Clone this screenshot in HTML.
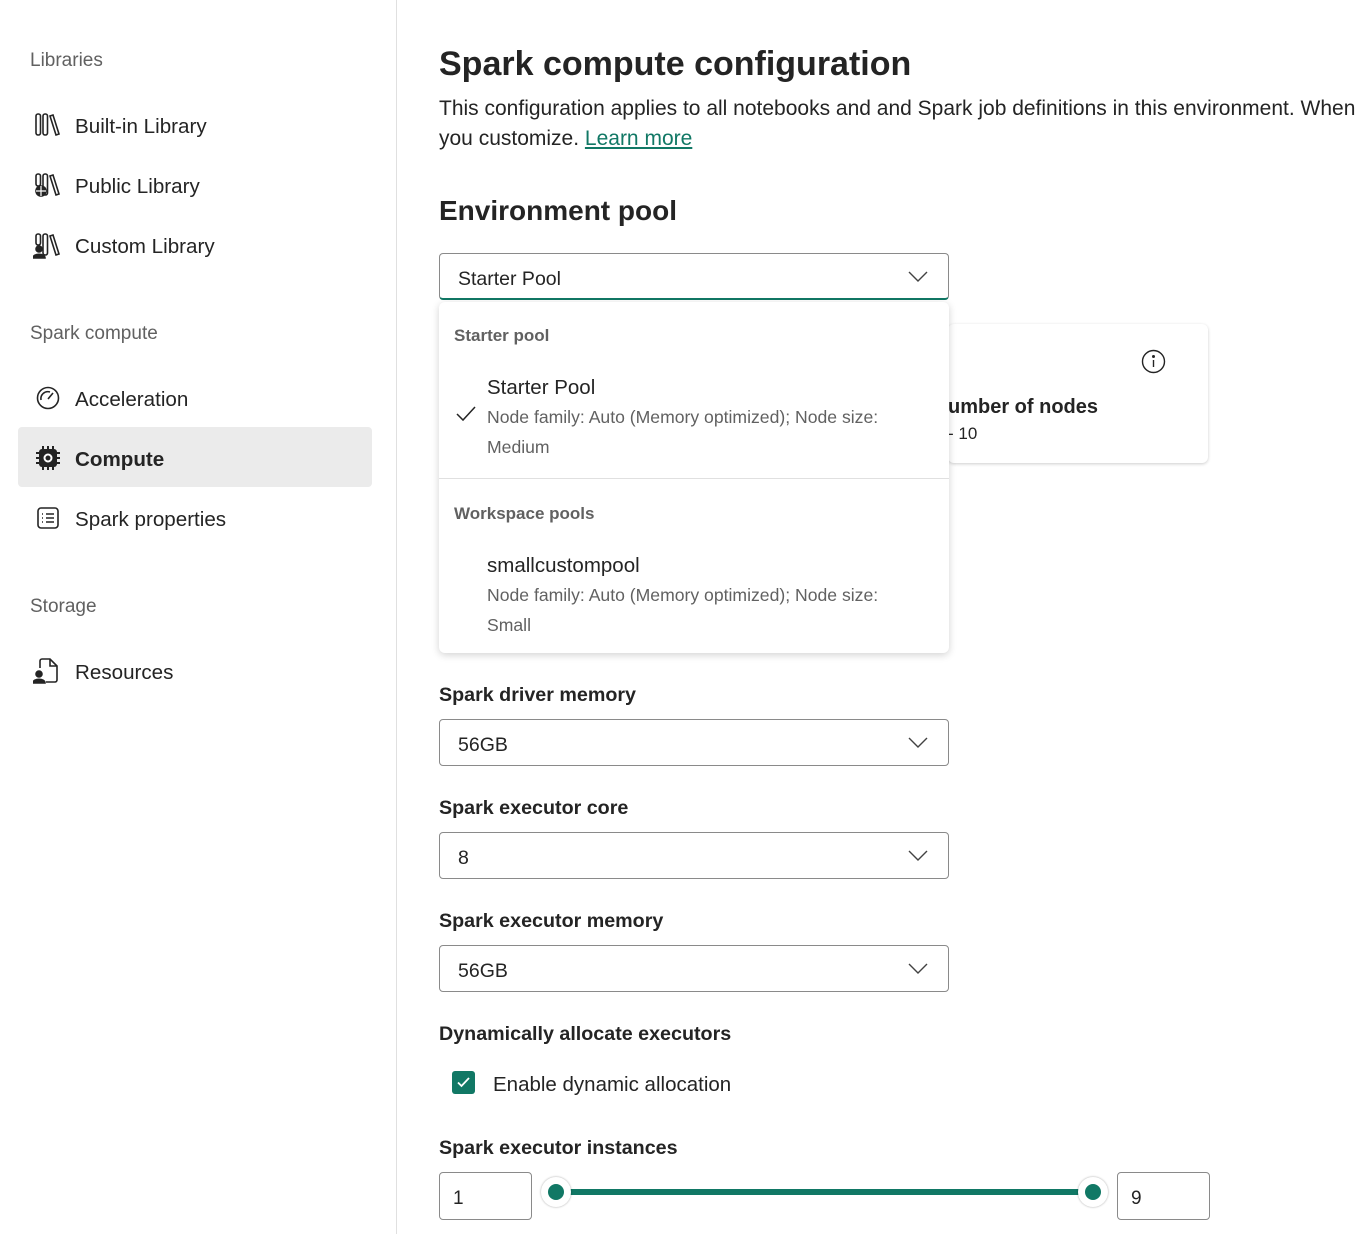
<!DOCTYPE html>
<html><head><meta charset="utf-8">
<style>
*{box-sizing:border-box;margin:0;padding:0}
body{width:1365px;height:1234px;overflow:hidden;background:#fff;font-family:"Liberation Sans",sans-serif;color:#242424;position:relative}
.a{position:absolute;white-space:nowrap}
.sec{color:#616161;font-size:19px;margin-top:2px}
.nav{font-size:20.6px;color:#242424;margin-top:1px}
.ic{position:absolute}
.lbl{font-size:19.7px;font-weight:600;color:#242424;margin-top:2px}
.dd{position:absolute;left:439px;width:510px;height:47px;border:1px solid #8a8a8a;border-radius:4px;font-size:19.5px;padding:14px 18px 0}
.chev{position:absolute;right:20px;top:17px}
.sub{font-size:17.6px;color:#616161}
</style></head><body>
<div class="a" style="left:396px;top:0;width:1px;height:1234px;background:#e0e0e0"></div>

<div class="a sec" style="left:30px;top:48px">Libraries</div>
<svg class="ic" style="left:35px;top:113px" width="26" height="24" viewBox="0 0 26 24" fill="none" stroke="#242424" stroke-width="1.6"><rect x="1" y="1" width="4.5" height="21" rx="2"/><rect x="8" y="1" width="4.5" height="21" rx="2"/><path d="M15 3 l3-1 6 19 -3 1z"/></svg>
<div class="a nav" style="left:75px;top:114px">Built-in Library</div>
<svg class="ic" style="left:35px;top:173px" width="26" height="24" viewBox="0 0 26 24" fill="none" stroke="#242424" stroke-width="1.6"><rect x="1" y="1" width="4.5" height="12" rx="2"/><rect x="8" y="1" width="4.5" height="21" rx="2"/><path d="M15 3 l3-1 6 19 -3 1z"/><circle cx="6" cy="18" r="5" fill="#242424"/><path d="M1 18h10M6 13v10" stroke="#fff" stroke-width="1.2"/></svg>
<div class="a nav" style="left:75px;top:174px">Public Library</div>
<svg class="ic" style="left:33px;top:233px" width="28" height="26" viewBox="0 0 28 26" fill="none" stroke="#242424" stroke-width="1.6"><rect x="3" y="1" width="4.5" height="11" rx="2"/><rect x="10" y="1" width="4.5" height="21" rx="2"/><path d="M17 3 l3-1 6 19 -3 1z"/><circle cx="6" cy="16" r="3" fill="#242424"/><path d="M0 25c0-5 12-5 12 0z" fill="#242424"/></svg>
<div class="a nav" style="left:75px;top:234px">Custom Library</div>

<div class="a sec" style="left:30px;top:321px">Spark compute</div>
<svg class="ic" style="left:36px;top:386px" width="24" height="24" viewBox="0 0 24 24" fill="none" stroke="#242424" stroke-width="1.6"><circle cx="12" cy="12" r="10.5"/><path d="M5 14a7 7 0 0 1 9-8"/><path d="M12 13l5-6"/></svg>
<div class="a nav" style="left:75px;top:387px">Acceleration</div>
<div class="a" style="left:18px;top:427px;width:354px;height:60px;background:#ebebeb;border-radius:4px"></div>
<svg class="ic" style="left:36px;top:446px" width="24" height="24" viewBox="0 0 24 24"><rect x="3" y="3" width="18" height="18" rx="3" fill="#242424"/><path d="M7 0v3M12 0v3M17 0v3M7 21v3M12 21v3M17 21v3M0 7h3M0 12h3M0 17h3M21 7h3M21 12h3M21 17h3" stroke="#242424" stroke-width="2"/><circle cx="12" cy="12" r="3.5" fill="none" stroke="#fff" stroke-width="2"/></svg>
<div class="a nav" style="left:75px;top:447px;font-weight:600">Compute</div>
<svg class="ic" style="left:37px;top:507px" width="22" height="22" viewBox="0 0 22 22" fill="none" stroke="#242424" stroke-width="1.6"><rect x="1" y="1" width="20" height="20" rx="3"/><path d="M9 7h8M9 11h8M9 15h8M5 7h1M5 11h1M5 15h1"/></svg>
<div class="a nav" style="left:75px;top:507px">Spark properties</div>

<div class="a sec" style="left:30px;top:594px">Storage</div>
<svg class="ic" style="left:33px;top:658px" width="26" height="26" viewBox="0 0 26 26" fill="none" stroke="#242424" stroke-width="1.6"><path d="M7 10V3a2 2 0 0 1 2-2h8l7 7v14a2 2 0 0 1-2 2h-9"/><path d="M17 1v7h7"/><circle cx="6" cy="16" r="3" fill="#242424"/><path d="M0 25c0-5 12-5 12 0z" fill="#242424"/></svg>
<div class="a nav" style="left:75px;top:660px">Resources</div>

<div class="a" style="left:439px;top:45px;font-size:34px;font-weight:600;color:#242424">Spark compute configuration</div>
<div class="a" style="left:439px;top:97px;font-size:21px;color:#242424">This configuration applies to all notebooks and and Spark job definitions in this environment. When</div>
<div class="a" style="left:439px;top:127px;font-size:21px;color:#242424">you customize. <span style="color:#117865;text-decoration:underline">Learn more</span></div>
<div class="a" style="left:439px;top:195px;font-size:28px;font-weight:600">Environment pool</div>

<div class="a" style="left:948px;top:324px;width:260px;height:139px;border-radius:6px;box-shadow:0 1px 3px rgba(0,0,0,.2);background:#fff"></div>
<svg class="ic" style="left:1141px;top:349px" width="25" height="25" viewBox="0 0 25 25" fill="none" stroke="#242424" stroke-width="1.4"><circle cx="12.5" cy="12.5" r="11"/><path d="M12.5 11v7"/><circle cx="12.5" cy="7.5" r=".8" fill="#242424"/></svg>
<div class="a" style="left:948px;top:396px;font-size:20px;font-weight:600">umber of nodes</div>
<div class="a" style="left:948px;top:424px;font-size:17px">- 10</div>

<div class="dd" style="top:253px;border-bottom:2px solid #117865">Starter Pool<svg class="chev" width="20" height="12" viewBox="0 0 20 12" fill="none" stroke="#424242" stroke-width="1.4"><path d="M1 1l9 9 9-9"/></svg></div>

<div class="a" style="left:439px;top:302px;width:510px;height:351px;background:#fff;border-radius:6px;box-shadow:0 2px 8px rgba(0,0,0,.18)">
 <div class="a" style="left:15px;top:24px;font-size:17px;font-weight:600;color:#616161">Starter pool</div>
 <div class="a" style="left:48px;top:74px;font-size:20.5px">Starter Pool</div>
 <svg class="ic" style="left:17px;top:104px" width="20" height="16" viewBox="0 0 20 16" fill="none" stroke="#242424" stroke-width="1.5"><path d="M1 8l6 6L19 1"/></svg>
 <div class="a sub" style="left:48px;top:105px">Node family: Auto (Memory optimized); Node size:</div>
 <div class="a sub" style="left:48px;top:135px">Medium</div>
 <div class="a" style="left:0;top:176px;width:510px;height:1px;background:#e0e0e0"></div>
 <div class="a" style="left:15px;top:202px;font-size:17px;font-weight:600;color:#616161">Workspace pools</div>
 <div class="a" style="left:48px;top:252px;font-size:20.5px">smallcustompool</div>
 <div class="a sub" style="left:48px;top:283px">Node family: Auto (Memory optimized); Node size:</div>
 <div class="a sub" style="left:48px;top:313px">Small</div>
</div>

<div class="a lbl" style="left:439px;top:682px">Spark driver memory</div>
<div class="dd" style="top:719px">56GB<svg class="chev" width="20" height="12" viewBox="0 0 20 12" fill="none" stroke="#424242" stroke-width="1.4"><path d="M1 1l9 9 9-9"/></svg></div>
<div class="a lbl" style="left:439px;top:795px">Spark executor core</div>
<div class="dd" style="top:832px">8<svg class="chev" width="20" height="12" viewBox="0 0 20 12" fill="none" stroke="#424242" stroke-width="1.4"><path d="M1 1l9 9 9-9"/></svg></div>
<div class="a lbl" style="left:439px;top:908px">Spark executor memory</div>
<div class="dd" style="top:945px">56GB<svg class="chev" width="20" height="12" viewBox="0 0 20 12" fill="none" stroke="#424242" stroke-width="1.4"><path d="M1 1l9 9 9-9"/></svg></div>
<div class="a lbl" style="left:439px;top:1021px">Dynamically allocate executors</div>
<div class="a" style="left:452px;top:1071px;width:23px;height:23px;background:#117865;border-radius:3px"></div>
<svg class="ic" style="left:457px;top:1077px" width="13" height="11" viewBox="0 0 13 11" fill="none" stroke="#fff" stroke-width="1.8"><path d="M1 5.5l3.5 3.5L12 1"/></svg>
<div class="a" style="left:493px;top:1073px;font-size:20.5px">Enable dynamic allocation</div>
<div class="a lbl" style="left:439px;top:1135px">Spark executor instances</div>
<div class="a" style="left:439px;top:1172px;width:93px;height:48px;border:1px solid #8a8a8a;border-radius:4px;font-size:19px;padding:15px 13px 0">1</div>
<div class="a" style="left:1117px;top:1172px;width:93px;height:48px;border:1px solid #8a8a8a;border-radius:4px;font-size:19px;padding:15px 13px 0">9</div>
<div class="a" style="left:556px;top:1189px;width:537px;height:6px;background:#117865;border-radius:3px"></div>
<div class="a" style="left:541px;top:1177px;width:30px;height:30px;border-radius:50%;background:#fff;box-shadow:0 0 2px rgba(0,0,0,.35)"></div>
<div class="a" style="left:548px;top:1184px;width:16px;height:16px;border-radius:50%;background:#117865"></div>
<div class="a" style="left:1078px;top:1177px;width:30px;height:30px;border-radius:50%;background:#fff;box-shadow:0 0 2px rgba(0,0,0,.35)"></div>
<div class="a" style="left:1085px;top:1184px;width:16px;height:16px;border-radius:50%;background:#117865"></div>
</body></html>
